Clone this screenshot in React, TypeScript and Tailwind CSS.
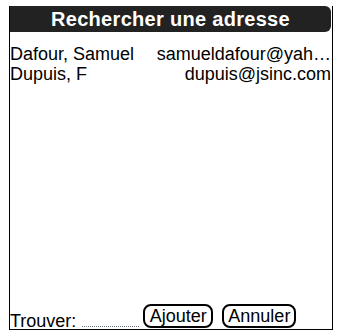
const contacts = [
  { name: "Dafour, Samuel", email: "samueldafour@yah…" },
  { name: "Dupuis, F", email: "dupuis@jsinc.com" },
];

export default function App() {
  return (
    <div
      className="w-[337px] h-[332px] bg-white pl-[9px] pr-[4px] pt-[6px] pb-[2px] text-black"
      style={{ fontFamily: '"Liberation Sans", Arial, sans-serif' }}
    >
      <div className="flex h-full flex-col border-b border-l border-r border-black">
        <div className="mr-[1px] flex h-[26px] shrink-0 items-center justify-center rounded-r-[6px] bg-[#222222] text-[20px] font-bold leading-none tracking-[0.3px] text-white">
          Rechercher une adresse
        </div>

        <div className="flex-1 pt-[12px] pr-[1px]">
          {contacts.map((c) => (
            <div
              key={c.name}
              className="flex h-[20px] items-center justify-between text-[18px] leading-[20px]"
            >
              <span>{c.name}</span>
              <span>{c.email}</span>
            </div>
          ))}
        </div>

        <div className="flex h-[26px] shrink-0 items-end text-[18px]">
          <span className="leading-[16px]">Trouver:</span>
          <span className="mb-[2px] ml-[6px] h-[1px] w-[57px] border-b border-dotted border-gray-500" />
          <button className="mb-[1px] ml-[4px] flex h-[24px] w-[70px] items-center justify-center rounded-[8px] border-2 border-black leading-none">
            Ajouter
          </button>
          <button className="mb-[1px] ml-[9px] flex h-[24px] w-[74px] items-center justify-center rounded-[8px] border-2 border-black leading-none">
            Annuler
          </button>
        </div>
      </div>
    </div>
  );
}
